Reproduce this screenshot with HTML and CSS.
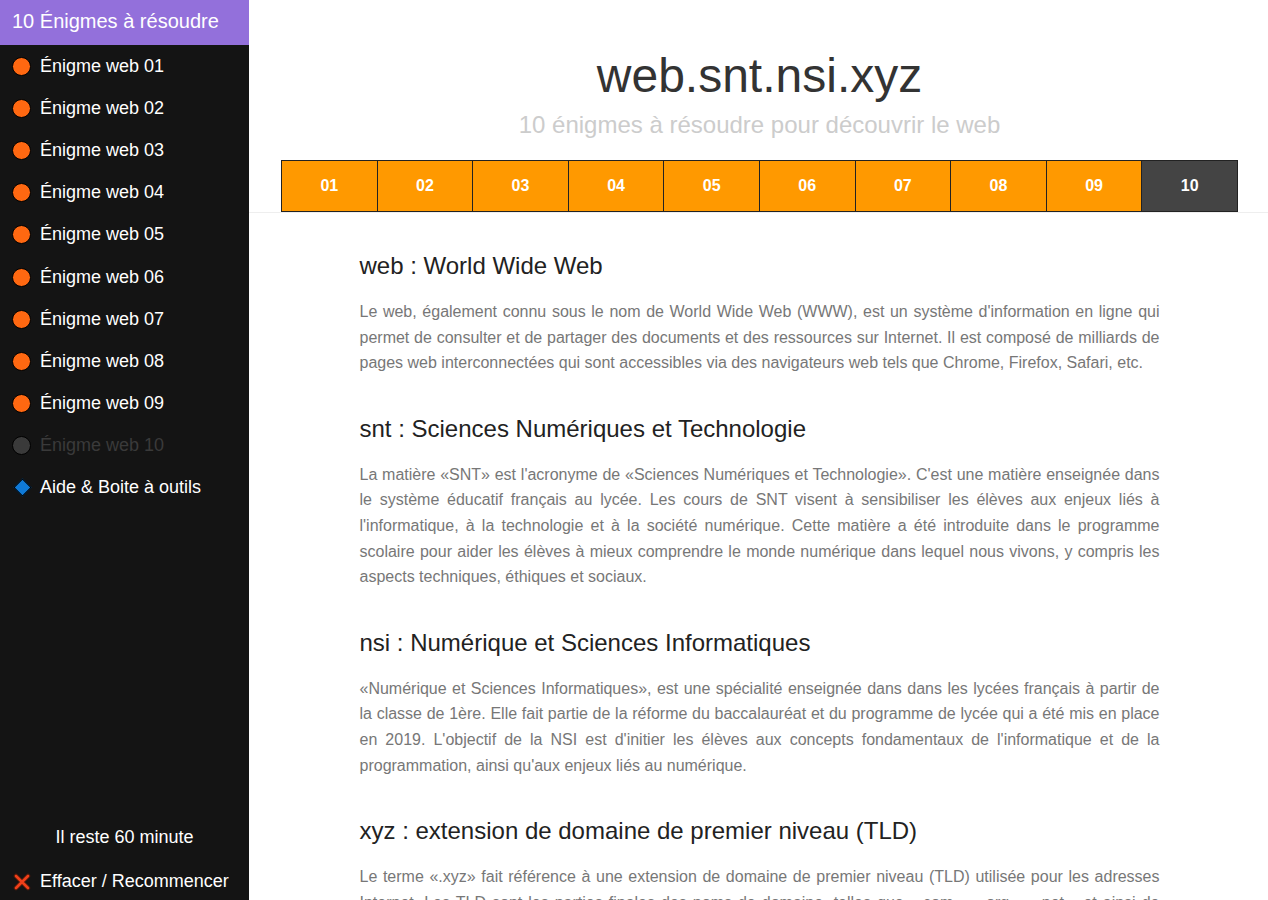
FILE: index.html
```html
<!DOCTYPE html>
<html lang="fr">
<head>
    <meta charset="UTF-8">
    <title>web.snt.nsi.xyz</title>
    <link rel="stylesheet" href="styles.css">
</head>
<body>
    <div class="layout">
        <nav class="sidebar">
            <div class="side-title">10 Énigmes à résoudre</div>
            <ul class="menu">
                <li><span class="dot"></span>Énigme web 01</li>
                <li><span class="dot"></span>Énigme web 02</li>
                <li><span class="dot"></span>Énigme web 03</li>
                <li><span class="dot"></span>Énigme web 04</li>
                <li><span class="dot"></span>Énigme web 05</li>
                <li><span class="dot"></span>Énigme web 06</li>
                <li><span class="dot"></span>Énigme web 07</li>
                <li><span class="dot"></span>Énigme web 08</li>
                <li><span class="dot"></span>Énigme web 09</li>
                <li class="locked"><span class="dot"></span>Énigme web 10</li>
                <li class="help"><span class="diamond"></span>Aide &amp; Boite à outils</li>
            </ul>
            <div class="side-bottom">
                <div class="timer">Il reste 60 minute</div>
                <div class="reset">
                    <svg width="18" height="18" viewBox="0 0 18 18"><path d="M3 3 L15 15 M15 3 L3 15" stroke="#5a1a0a" stroke-width="4.5" stroke-linecap="round"/><path d="M3 3 L15 15 M15 3 L3 15" stroke="#f0401a" stroke-width="2.5" stroke-linecap="round"/></svg>
                    Effacer / Recommencer
                </div>
            </div>
        </nav>

        <main class="main">
            <header class="header">
                <h1>web.snt.nsi.xyz</h1>
                <p class="subtitle">10 énigmes à résoudre pour découvrir le web</p>
                <div class="steps">
                    <a>01</a><a>02</a><a>03</a><a>04</a><a>05</a>
                    <a>06</a><a>07</a><a>08</a><a>09</a><a class="current">10</a>
                </div>
            </header>

            <div class="content">
                <h2>web : World Wide Web</h2>
                <p>Le web, également connu sous le nom de World Wide Web (WWW), est un système d'information en ligne qui permet de consulter et de partager des documents et des ressources sur Internet. Il est composé de milliards de pages web interconnectées qui sont accessibles via des navigateurs web tels que Chrome, Firefox, Safari, etc.</p>

                <h2>snt : Sciences Numériques et Technologie</h2>
                <p>La matière «SNT» est l'acronyme de «Sciences Numériques et Technologie». C'est une matière enseignée dans le système éducatif français au lycée. Les cours de SNT visent à sensibiliser les élèves aux enjeux liés à l'informatique, à la technologie et à la société numérique. Cette matière a été introduite dans le programme scolaire pour aider les élèves à mieux comprendre le monde numérique dans lequel nous vivons, y compris les aspects techniques, éthiques et sociaux.</p>

                <h2>nsi : Numérique et Sciences Informatiques</h2>
                <p>«Numérique et Sciences Informatiques», est une spécialité enseignée dans dans les lycées français à partir de la classe de 1ère. Elle fait partie de la réforme du baccalauréat et du programme de lycée qui a été mis en place en 2019. L'objectif de la NSI est d'initier les élèves aux concepts fondamentaux de l'informatique et de la programmation, ainsi qu'aux enjeux liés au numérique.</p>

                <h2>xyz : extension de domaine de premier niveau (TLD)</h2>
                <p>Le terme «.xyz» fait référence à une extension de domaine de premier niveau (TLD) utilisée pour les adresses Internet. Les TLD sont les parties finales des noms de domaine, telles que «.com», «.org», «.net», et ainsi de suite. L'extension «.xyz» a été lancée en 2014 et elle est ouverte à tous.</p>
            </div>
        </main>
    </div>
</body>
</html>
```

FILE: styles.css
```css
html, body { margin: 0; padding: 0; height: 100%; overflow: hidden; }
body { font-family: "Liberation Sans", Arial, sans-serif; background: #fff; }

.layout { display: flex; height: 900px; }

/* menu de gauche */
.sidebar { width: 249px; flex-shrink: 0; background: #141414; color: #fff; display: flex; flex-direction: column; }
.side-title { background: #9370db; height: 45px; line-height: 42px; padding-left: 12px; font-size: 20px; }
.menu { list-style: none; margin: 0; padding: 0; }
.menu li { display: flex; align-items: center; height: 42.2px; padding-left: 12px; font-size: 18px; }
.dot { width: 17px; height: 17px; border-radius: 50%; background: #ff6811; border: 1px solid #000; margin-right: 9px; }
.locked { color: #3a3a3a; }
.locked .dot { background: #3a3a3a; }
.diamond { width: 11px; height: 11px; background: #0f7ad8; border: 1px solid #000; transform: rotate(45deg); margin: 0 11px 0 4px; }
.side-bottom { margin-top: auto; padding-bottom: 8px; }
.timer { text-align: center; font-size: 18px; padding-bottom: 23px; }
.reset { display: flex; align-items: center; gap: 9px; padding-left: 13px; font-size: 18px; }

/* zone principale */
.main { flex: 1; overflow: hidden; }
.header { text-align: center; padding: 50px 30px 0 32px; border-bottom: 1px solid #eee; }
.header h1 { margin: 0; font-size: 48px; font-weight: normal; color: #333; line-height: 52px; }
.subtitle { margin: 9px 0 0; font-size: 24px; color: #ccc; line-height: 28px; }
.steps { display: flex; margin-top: 21px; border: 1px solid #222; }
.steps a { flex: 1; height: 50px; line-height: 50px; background: #f90; color: #fff; font-weight: bold; font-size: 16px; border-left: 1px solid #222; }
.steps a:first-child { border-left: none; }
.steps a.current { background: #444; }

.content { width: 800px; margin: 0 auto; padding-top: 38px; padding-left: 2px; }
.content h2 { margin: 0 0 18px; font-size: 24px; font-weight: normal; color: #222; line-height: 30px; }
.content p { margin: 0 0 38px; font-size: 16px; line-height: 25.6px; color: #777; text-align: justify; }
```
